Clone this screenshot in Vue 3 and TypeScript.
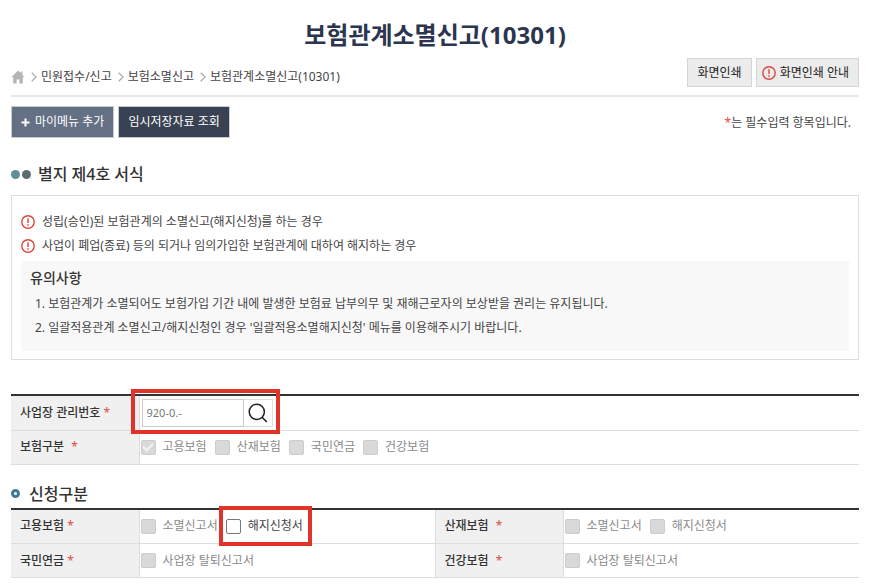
<script setup lang="ts">
import { ref } from 'vue'

interface Choice {
  label: string
  checked: boolean
  disabled: boolean
  marked?: boolean
}
interface Field {
  name: string
  wide?: boolean
  choices: Choice[]
}

const off = (label: string): Choice => ({ label, checked: false, disabled: true })

const crumbs = ['민원접수/신고', '보험소멸신고', '보험관계소멸신고(10301)']
const notices = [
  '성립(승인)된 보험관계의 소멸신고(해지신청)를 하는 경우',
  '사업이 폐업(종료) 등의 되거나 임의가입한 보험관계에 대하여 해지하는 경우',
]
const cautions = [
  "보험관계가 소멸되어도 보험가입 기간 내에 발생한 보험료 납부의무 및 재해근로자의 보상받을 권리는 유지됩니다.",
  "일괄적용관계 소멸신고/해지신청인 경우 '일괄적용소멸해지신청' 메뉴를 이용해주시기 바랍니다.",
]
const siteNumber = ref('920-0.-')
const kinds = ref<Choice[]>([
  { label: '고용보험', checked: true, disabled: true },
  off('산재보험'),
  off('국민연금'),
  off('건강보험'),
])
const rows = ref<Field[][]>([
  [
    {
      name: '고용보험',
      choices: [off('소멸신고서'), { label: '해지신청서', checked: false, disabled: false, marked: true }],
    },
    { name: '산재보험', wide: true, choices: [off('소멸신고서'), off('해지신청서')] },
  ],
  [
    { name: '국민연금', choices: [off('사업장 탈퇴신고서')] },
    { name: '건강보험', wide: true, choices: [off('사업장 탈퇴신고서')] },
  ],
])
</script>

<template>
  <main class="page">
    <h1>보험관계소멸신고(10301)</h1>

    <div class="topbar">
      <nav class="crumbs">
        <a href="#" aria-label="홈">
          <svg class="home" viewBox="0 0 14 14"><path d="M7 0.5 0.3 7.3h1.9v6.2h3.4V9.4h2.8v4.1h3.4V7.3h1.9L11.4 4.9V1.6H9.6v1.5z" /></svg>
        </a>
        <template v-for="c in crumbs" :key="c">
          <svg class="chev" viewBox="0 0 6 10"><path d="M0.7 0.7 5.2 5 0.7 9.3" /></svg>
          <a href="#">{{ c }}</a>
        </template>
      </nav>
      <div class="prints">
        <button type="button" class="print">화면인쇄</button>
        <button type="button" class="print guide">
          <svg class="warn" viewBox="0 0 14 14"><circle cx="7" cy="7" r="6.2" /><path d="M7 3.3v4.8M7 9.3v1.4" /></svg>
          화면인쇄 안내
        </button>
      </div>
    </div>

    <div class="actions">
      <button type="button" class="act add">
        <svg class="plus" viewBox="0 0 9 9"><path d="M4.5 0.5v8M0.5 4.5h8" /></svg>
        마이메뉴 추가
      </button>
      <button type="button" class="act load">임시저장자료 조회</button>
      <p class="required"><span class="star">*</span>는 필수입력 항목입니다.</p>
    </div>

    <h2 class="form-title"><i class="dot teal"></i><i class="dot slate"></i>별지 제4호 서식</h2>

    <section class="guide-box">
      <ul class="notices">
        <li v-for="n in notices" :key="n">
          <svg class="warn" viewBox="0 0 14 14"><circle cx="7" cy="7" r="6.2" /><path d="M7 3.3v4.8M7 9.3v1.4" /></svg>
          {{ n }}
        </li>
      </ul>
      <div class="caution">
        <h3>유의사항</h3>
        <ol>
          <li v-for="(c, i) in cautions" :key="c">{{ i + 1 }}. {{ c }}</li>
        </ol>
      </div>
    </section>

    <table class="form">
      <colgroup><col class="head" /><col /></colgroup>
      <tbody>
        <tr>
          <th scope="row"><label for="site-no">사업장 관리번호</label> <span class="star">*</span></th>
          <td>
            <div class="search">
              <input id="site-no" v-model="siteNumber" type="text" />
              <button type="button" aria-label="검색">
                <svg viewBox="0 0 20 20"><circle cx="8.8" cy="8.8" r="7.6" /><path d="m14.2 14.4 4.6 4.6" /></svg>
              </button>
            </div>
          </td>
        </tr>
        <tr>
          <th scope="row">보험구분 <span class="star apart">*</span></th>
          <td>
            <div class="choices">
              <label v-for="k in kinds" :key="k.label" :class="{ disabled: k.disabled }">
                <input v-model="k.checked" type="checkbox" :disabled="k.disabled" />{{ k.label }}
              </label>
            </div>
          </td>
        </tr>
      </tbody>
    </table>

    <h2 class="apply-title"><i class="ring"></i>신청구분</h2>

    <table class="form quad">
      <colgroup><col class="head" /><col /><col class="head" /><col /></colgroup>
      <tbody>
        <tr v-for="(row, r) in rows" :key="r">
          <template v-for="f in row" :key="f.name">
            <th scope="row">{{ f.name }} <span class="star" :class="{ apart: f.wide }">*</span></th>
            <td>
              <div class="choices">
                <label v-for="k in f.choices" :key="k.label" :class="{ disabled: k.disabled, marked: k.marked }">
                  <input v-model="k.checked" type="checkbox" :disabled="k.disabled" />{{ k.label }}
                </label>
              </div>
            </td>
          </template>
        </tr>
      </tbody>
    </table>
  </main>
</template>

<style>
body {
  margin: 0;
  background: #fff;
}
</style>

<style scoped>
* {
  box-sizing: border-box;
}
.page {
  padding: 15px 10px 8px 11px;
  font: 12px/24px 'Noto Sans', 'Noto Sans CJK KR', sans-serif;
  color: #444;
}
h1, h2, h3, p, ul, ol {
  margin: 0;
  padding: 0;
}
ul, ol {
  list-style: none;
}
button, input {
  font: inherit;
  color: inherit;
  margin: 0;
}
svg {
  display: block;
  flex: none;
  fill: none;
}
a {
  color: inherit;
  text-decoration: none;
}
h1 {
  margin-bottom: 1px;
  font-size: 24px;
  line-height: 40px;
  font-weight: 700;
  text-align: center;
  color: #2c3550;
}
.topbar {
  display: flex;
  justify-content: space-between;
  align-items: flex-start;
  height: 41px;
  border-bottom: 2px solid #e8e8e8;
}
.crumbs {
  display: flex;
  align-items: center;
  padding-top: 9px;
  line-height: 24px;
}
.home {
  width: 14px;
  height: 14px;
  fill: #b5b5b5;
}
.chev {
  width: 6px;
  height: 10px;
  margin: 0 4px 0 6px;
  stroke: #aaa;
  stroke-width: 1.2;
}
.prints {
  display: flex;
  gap: 4px;
  padding-top: 2px;
}
.print {
  display: flex;
  align-items: center;
  height: 29px;
  padding: 0 9px;
  border: 1px solid #d5d5d5;
  background: #ececec;
  color: #222;
}
.guide {
  gap: 4px;
  padding: 0 9px 0 5px;
}
.warn {
  width: 14px;
  height: 14px;
  stroke: #dc4540;
  stroke-width: 1.4;
}
.actions {
  display: flex;
  gap: 4px;
  margin-top: 9px;
}
.act {
  display: flex;
  align-items: center;
  height: 32px;
  padding: 0 9px;
  border: 1px solid #c8ccd2;
  color: #fff;
}
.add {
  gap: 5px;
  background: #647084;
}
.load {
  background: #384252;
}
.plus {
  width: 9px;
  height: 9px;
  stroke: #fff;
  stroke-width: 2;
}
.required {
  margin-left: auto;
  padding: 5px 8px 0 0;
}
.star {
  color: #e04a44;
}
.apart {
  margin-left: 4px;
}
h2 {
  display: flex;
  align-items: center;
  font-size: 16px;
  line-height: 24px;
  font-weight: 500;
  color: #333;
}
.form-title {
  margin-top: 24px;
}
.dot {
  width: 9px;
  height: 9px;
  margin-right: 2px;
  border-radius: 50%;
}
.teal {
  background: #5f8f98;
}
.slate {
  margin-right: 7px;
  background: #5b6b70;
}
.guide-box {
  margin-top: 9px;
  padding: 14px 9px 8px;
  border: 1px solid #ddd;
}
.notices li {
  display: flex;
  align-items: center;
  gap: 7px;
}
.caution {
  margin-top: 3px;
  padding: 5px 9px 11px;
  background: #f8f8f8;
}
h3 {
  font-size: 14px;
  line-height: 24px;
  font-weight: 500;
  color: #333;
}
.caution ol {
  padding: 2px 0 0 5px;
}
.form {
  width: 100%;
  margin-top: 34px;
  border-collapse: collapse;
  table-layout: fixed;
  border-top: 2px solid #333;
}
.head {
  width: 128px;
}
.form th,
.form td {
  height: 34px;
  padding: 0;
  border-bottom: 1px solid #ddd;
}
.form tr:first-child td {
  height: 35px;
}
.form th {
  padding-left: 9px;
  border-right: 1px solid #ddd;
  background: #f0f0f0;
  font-weight: 500;
  text-align: left;
  color: #333;
}
.form td + th {
  border-left: 1px solid #ddd;
}
.form td {
  padding-left: 1px;
}
.form th .star {
  font-weight: 400;
}
.search {
  position: relative;
  display: flex;
  width: 131px;
  height: 28px;
  margin-left: 1px;
}
.search input {
  flex: 1;
  min-width: 0;
  padding: 0 4px;
  border: 1px solid #ccc;
  font-size: 11px;
  color: #777;
  background: #fff;
}
.search button {
  display: grid;
  place-items: center;
  width: 29px;
  padding: 0;
  border: 1px solid #ddd;
  border-left: 0;
  background: #fff;
}
.search svg {
  width: 20px;
  height: 20px;
  stroke: #222;
  stroke-width: 1.5;
}
.search::after,
.marked::after {
  content: '';
  position: absolute;
  border: 4px solid #df3427;
  pointer-events: none;
}
.search::after {
  inset: -10px -7px -7px -11px;
}
.choices {
  display: flex;
  gap: 8px;
}
.choices label {
  position: relative;
  display: flex;
  align-items: center;
  gap: 7px;
}
.marked::after {
  inset: -8px -9px -8px -7px;
}
.disabled {
  color: #8a8a8a;
}
.choices input {
  appearance: none;
  display: grid;
  place-items: center;
  width: 15px;
  height: 15px;
  border: 1px solid #777;
  border-radius: 2px;
  background: #fff;
}
.choices input:disabled {
  border-color: #ccc;
  background: #d9d9d9;
}
.choices input:checked::after {
  content: '';
  width: 8px;
  height: 4px;
  margin-bottom: 3px;
  border: solid #f4f4f4;
  border-width: 0 0 2px 2px;
  transform: rotate(-45deg);
}
.apply-title {
  margin-top: 17px;
}
.ring {
  width: 9px;
  height: 9px;
  margin-right: 9px;
  border: 3px solid #417a97;
  border-radius: 50%;
}
.quad {
  margin-top: 2px;
}
</style>
